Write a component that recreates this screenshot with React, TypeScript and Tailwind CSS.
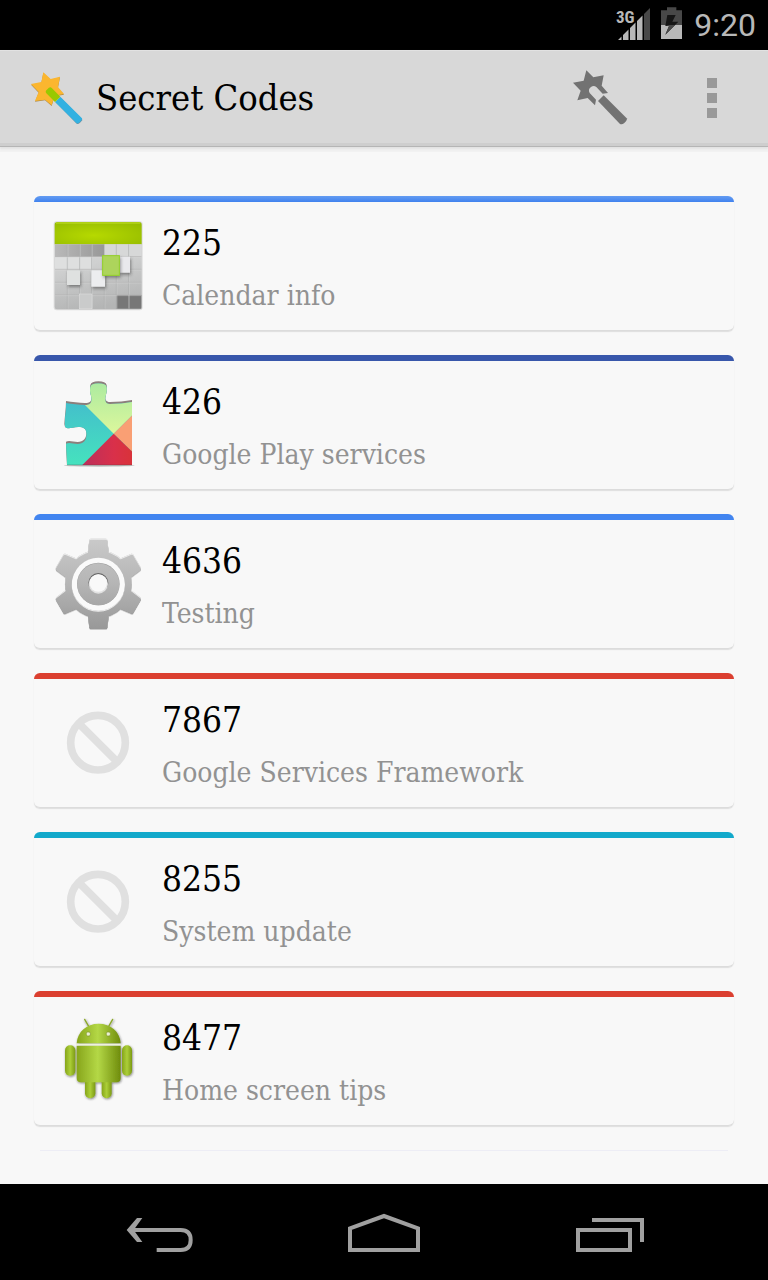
import React from "react";

type Code = { code: string; label: string; bar: string; icon: () => React.ReactElement };

function CalendarIcon() {
  const cols = [124, 161, 197, 235, 271, 308];
  const rows = [212, 250, 289, 327];
  return (
    <svg viewBox="72 96 288 288" className="size-24" aria-hidden="true">
      <defs>
        <radialGradient id="calTop" cx="0.45" cy="0.6" r="0.7">
          <stop offset="0" stopColor="#b6d900" />
          <stop offset="1" stopColor="#97bd00" />
        </radialGradient>
        <linearGradient id="calBody" x1="0.2" y1="0" x2="0.4" y2="1">
          <stop offset="0" stopColor="#dcdddd" />
          <stop offset="0.5" stopColor="#cfd0d0" />
          <stop offset="1" stopColor="#b4b5b5" />
        </linearGradient>
        <linearGradient id="calRow" x1="0" x2="1">
          <stop offset="0" stopColor="#b9b9b9" />
          <stop offset="1" stopColor="#989898" />
        </linearGradient>
        <filter id="calShadow" x="-30%" y="-30%" width="170%" height="170%">
          <feDropShadow dx="3" dy="6" stdDeviation="4" floodColor="#333" floodOpacity="0.5" />
        </filter>
      </defs>
      <rect x="83" y="106" width="267" height="267" rx="9" fill="#dcdcdc" />
      <rect x="86" y="108" width="261" height="262" rx="7" fill="url(#calBody)" />
      <path d="M86 175V116q0-8 8-8h245q8 0 8 8v59z" fill="url(#calTop)" />
      <path d="M90 111h253" stroke="#c2e02a" strokeWidth="3" />
      <rect x="87" y="175" width="148" height="37" fill="url(#calRow)" />
      <rect x="235" y="175" width="111" height="37" fill="#d7d8d8" />
      <rect x="87" y="213" width="110" height="37" fill="#dedfdf" />
      <rect x="271" y="327" width="75" height="41" fill="#777" />
      {cols.map((x) => (
        <g key={x}>
          <path d={`M${x} 175V368`} stroke="#a9aaaa" strokeWidth="2" />
          <path d={`M${x + 2} 175V368`} stroke="#dedede" strokeWidth="1" />
        </g>
      ))}
      {rows.map((y) => (
        <g key={y}>
          <path d={`M87 ${y}H346`} stroke="#b0b1b1" strokeWidth="2" />
          <path d={`M87 ${y + 2}H346`} stroke="#e2e2e2" strokeWidth="1" />
        </g>
      ))}
      <rect x="160" y="324" width="38" height="44" fill="#cacbcb" stroke="#dcdcdc" strokeWidth="2" />
      <g filter="url(#calShadow)">
        <rect x="123" y="253" width="39" height="44" fill="#dfe1e0" />
        <rect x="281" y="212" width="31" height="48" fill="#e9e9ec" />
        <rect x="196" y="253" width="41" height="49" fill="#ecedef" />
      </g>
      <rect x="229" y="208" width="52" height="61" fill="#add45c" filter="url(#calShadow)" />
      <rect x="230" y="209" width="50" height="59" fill="none" stroke="#93cf2b" strokeWidth="3" />
    </svg>
  );
}

function PlayServicesIcon() {
  const shape =
    "M120 153C140 156 165 160 182 159C194 158 199 149 195 137C192 130 191 115 193 105Q196 94 217 94Q239 94 242 105C244 115 242 130 239 138C236 149 240 156 252 156C275 156 298 153 318 150V346H123C122 325 120 298 120 275C130 270 142 276 155 276C172 276 181 265 181 250C181 236 172 231 157 231C140 231 133 237 122 234Q115 231 115 222C116 200 120 178 120 153z";
  return (
    <svg viewBox="72 81 288 288" className="size-24" aria-hidden="true">
      <defs>
        <clipPath id="puzzle">
          <path d={shape} />
        </clipPath>
        <clipPath id="puzzleFace">
          <path d={shape} transform="translate(0 6)" />
        </clipPath>
        <linearGradient id="pTeal" x1="0" y1="0" x2="0" y2="1">
          <stop offset="0.2" stopColor="#43bdcc" />
          <stop offset="1" stopColor="#46e5bd" />
        </linearGradient>
        <linearGradient id="pGreen" x1="0" y1="0" x2="0" y2="1">
          <stop offset="0" stopColor="#a9eaa0" />
          <stop offset="1" stopColor="#dcf79c" />
        </linearGradient>
        <linearGradient id="pRed" x1="0" x2="1">
          <stop offset="0" stopColor="#b92f5c" />
          <stop offset="0.6" stopColor="#d9304a" />
          <stop offset="1" stopColor="#d93336" />
        </linearGradient>
      </defs>
      <ellipse cx="220" cy="347" rx="106" ry="3" fill="#999" opacity="0.6" />
      <path d={shape} fill="#8c7f7c" />
      <g clipPath="url(#puzzle)">
        <g clipPath="url(#puzzleFace)">
          <rect x="100" y="90" width="230" height="270" fill="url(#pTeal)" />
          <path d="M263 251L100 88H330V185z" fill="url(#pGreen)" />
          <path d="M330 185L263 251L330 316z" fill="#f99f74" />
          <path d="M263 251L330 316V350H164z" fill="url(#pRed)" />
        </g>
        <path d="M115 345H320" stroke="#593744" strokeWidth="2" opacity="0.5" />
      </g>
    </svg>
  );
}

function GearIcon() {
  const teeth = [0, 60, 120, 180, 240, 300];
  return (
    <svg viewBox="72 78 288 288" className="size-24" aria-hidden="true">
      <defs>
        <linearGradient id="gear" gradientUnits="userSpaceOnUse" x1="0" y1="86" x2="0" y2="354">
          <stop offset="0" stopColor="#c9c9c9" />
          <stop offset="0.5" stopColor="#b5b5b5" />
          <stop offset="1" stopColor="#989898" />
        </linearGradient>
        <mask id="teeth" maskUnits="userSpaceOnUse" x="72" y="78" width="288" height="288">
          <circle cx="217" cy="220" r="100" fill="#fff" />
          {teeth.map((a) => (
            <path key={a} d="M185 130L190 90Q191 86 195 86H239Q243 86 244 90L249 130z" fill="#fff" transform={`rotate(${a} 217 220)`} />
          ))}
          <circle cx="217" cy="222" r="80" fill="#000" />
        </mask>
        <filter id="gearEdge" x="-10%" y="-10%" width="120%" height="120%">
          <feDropShadow dx="0" dy="1" stdDeviation="2" floodColor="#444" floodOpacity="0.8" />
        </filter>
      </defs>
      <g filter="url(#gearEdge)">
        <rect x="72" y="78" width="288" height="288" fill="#ededed" mask="url(#teeth)" />
        <g transform="translate(0 3)">
          <rect x="72" y="78" width="288" height="285" fill="url(#gear)" mask="url(#teeth)" />
        </g>
      </g>
      <circle cx="217" cy="222" r="79" fill="#fafafa" />
      <circle cx="217" cy="222" r="64" fill="#a3a3a3" />
      <circle cx="217" cy="223" r="63" fill="url(#gear)" />
      <circle cx="217" cy="219" r="30" fill="#666" />
      <circle cx="217" cy="222" r="29" fill="#e2e2e2" />
      <circle cx="217" cy="219" r="26" fill="#f9f9f9" />
    </svg>
  );
}

function NoIcon() {
  return (
    <svg viewBox="72 87 288 288" className="size-24" fill="none" stroke="#e0e0e0" strokeWidth="23" aria-hidden="true">
      <circle cx="216" cy="230" r="82" />
      <path d="M160 174L272 286" />
    </svg>
  );
}

function AndroidIcon() {
  return (
    <svg viewBox="72 87 288 288" className="size-24" aria-hidden="true">
      <defs>
        <linearGradient id="droid" x1="0" x2="1">
          <stop offset="0" stopColor="#87a51b" />
          <stop offset="0.48" stopColor="#b4d846" />
          <stop offset="1" stopColor="#6f8c0c" />
        </linearGradient>
        <linearGradient id="limb" x1="0" x2="1">
          <stop offset="0" stopColor="#86a51b" />
          <stop offset="0.5" stopColor="#accf38" />
          <stop offset="1" stopColor="#7c9a15" />
        </linearGradient>
        <filter id="droidShadow" x="-10%" y="-10%" width="125%" height="125%">
          <feDropShadow dx="2" dy="3" stdDeviation="2.500" floodColor="#222" floodOpacity="0.55" />
        </filter>
      </defs>
      <g filter="url(#droidShadow)">
        <path d="M176 106L188 127M260 106L248 127" stroke="#8ba82b" strokeWidth="4" strokeLinecap="round" />
        <rect x="177" y="280" width="31" height="63" rx="15" fill="url(#limb)" />
        <rect x="227" y="280" width="30" height="63" rx="15" fill="url(#limb)" />
        <rect x="117" y="184" width="31" height="91" rx="15" fill="url(#limb)" />
        <rect x="288" y="184" width="30" height="91" rx="15" fill="url(#limb)" />
        <path d="M152 178C154 143 182 119 218 119S282 143 284 178z" fill="url(#droid)" />
        <path d="M152 185H284V282Q284 295 271 295H165Q152 295 152 282z" fill="url(#droid)" />
      </g>
      <path d="M152 181.500H284" stroke="#edf1dc" strokeWidth="5" />
      <rect x="181" y="144" width="12" height="12" rx="4" fill="#e9efd0" stroke="#7c941f" strokeWidth="2" />
      <rect x="241" y="144" width="12" height="12" rx="4" fill="#e9efd0" stroke="#7c941f" strokeWidth="2" />
    </svg>
  );
}

const codes: Code[] = [
  { code: "225", label: "Calendar info", bar: "bg-linear-to-b from-[#649cf2] to-[#4082ee]", icon: CalendarIcon },
  { code: "426", label: "Google Play services", bar: "bg-[#3857ab]", icon: PlayServicesIcon },
  { code: "4636", label: "Testing", bar: "bg-[#4285f0]", icon: GearIcon },
  { code: "7867", label: "Google Services Framework", bar: "bg-[#db3f30]", icon: NoIcon },
  { code: "8255", label: "System update", bar: "bg-[#12a9cb]", icon: NoIcon },
  { code: "8477", label: "Home screen tips", bar: "bg-[#db3f30]", icon: AndroidIcon },
];

function StatusBar() {
  return (
    <div className="flex h-[50px] items-center justify-end bg-black pr-3 text-[#b8b8b8]">
      <svg viewBox="0 5 40 40" className="mr-2 size-10" role="img" aria-label="3G signal">
        <path d="M38 8V40H32V14z" fill="#484848" />
        <path d="M30.500 15.500V40H25V21zM23.500 22.500V40H18V28zM16.500 29.500V40H11V35zM9.500 36.500V40H6z" fill="#b8b8b8" />
        <text x="4" y="23" fill="#b8b8b8" fontSize="17" fontWeight="700" fontFamily="'Liberation Sans Narrow','Roboto Condensed',Roboto,sans-serif">3G</text>
      </svg>
      <svg viewBox="180 21 72 108" className="mr-[10px] h-9 w-6" role="img" aria-label="Battery charging">
        <path d="M183 31H201V22H229V31H246V75H183z" fill="#484848" />
        <path d="M183 75H246V117H183z" fill="#b8b8b8" />
        <path d="M202 45H227L217 65H235L196 104L207 78H196z" fill="#151515" />
        <path d="M198 75H225L196 104L207 78z" fill="#484848" />
      </svg>
      <time className="font-[Roboto,sans-serif] text-[32px] leading-[50px]">9:20</time>
    </div>
  );
}

function Header() {
  return (
    <header className="z-10 flex h-[97px] items-center border-t border-b border-t-[#e2e2e2] border-b-[#b5b5b5] bg-[#d8d8d8] px-6 pb-px shadow-[inset_0_-3px_0_#cecece,0_2px_2px_#e2e2e2,0_5px_0_#f2f2f2]">
      <svg viewBox="72 66 192 192" className="mr-2 size-16" aria-hidden="true">
        <path d="M130 87L152 107L180 100L174 131L192 152L164 157L155 186L135 169L105 173L116 146L93 122L124 116z" fill="#a98749" />
        <path d="M130 85L152 105L180 98L174 129L192 150L164 155L155 184L135 167L105 171L116 144L93 120L124 114z" fill="#fbb62f" />
        <path d="M167 175L230 239Q236 243 247 229L246 225L182 161z" fill="#6f8f9d" />
        <path d="M165 174L229 237Q234 241 240 234Q248 227 246 223L181 158z" fill="#33b1e1" />
        <path d="M139 148Q134 142 142 136Q150 126 156 133L181 158L165 174z" fill="#98c900" />
      </svg>
      <h1 className="flex-1 text-[36px] leading-[48px] text-black">Secret Codes</h1>
      <button type="button" aria-label="Search for secret codes" className="mr-12">
        <svg viewBox="84 48 192 192" className="size-16" fill="#727272" aria-hidden="true">
          <path d="M139 61L160 82L191 76L185 107L204 129L188 131L169 111Q161 105 153 111Q143 119 149 129L168 149L165 166L143 144L112 151L122 122L99 98L131 92z" />
          <path d="M174 153L191 136L260 205Q263 210 253 219Q246 225 240 222z" />
        </svg>
      </button>
      <button type="button" aria-label="More options" className="flex w-16 flex-col items-center gap-[5px]">
        <span className="size-[10px] bg-[#999]" />
        <span className="size-[10px] bg-[#999]" />
        <span className="size-[10px] bg-[#999]" />
      </button>
    </header>
  );
}

function CodeCard({ code, label, bar, icon: Icon }: Code) {
  return (
    <li className="overflow-hidden rounded-md border-b border-[#dcdcdc] bg-[#f8f8f8] shadow-[0_1px_1px_#dedede]">
      <div className={`h-[6px] ${bar}`} />
      <a href={`#${code}`} className="flex items-center gap-4 px-4 py-[14px]">
        <Icon />
        <div>
          <div className="text-[35px] leading-[54px] text-black">{code}</div>
          <div className="mt-[6px] text-[28px] leading-[40px] text-[#929292]">{label}</div>
        </div>
      </a>
    </li>
  );
}

function NavBar() {
  return (
    <nav className="flex h-24 items-center justify-center gap-36 bg-black">
      <button type="button" aria-label="Back">
        <svg viewBox="60 84 240 144" className="h-12 w-20" fill="none" stroke="#a0a0a0" strokeWidth="12" aria-hidden="true">
          <path d="M94 150H242C263 150 272 162 272 180S263 210 242 210H170" />
          <path d="M111 114H127L101 150L127 186H111L80 150z" fill="#a0a0a0" stroke="none" />
        </svg>
      </button>
      <button type="button" aria-label="Home">
        <svg viewBox="732 84 240 144" className="h-12 w-20" fill="none" stroke="#a0a0a0" strokeWidth="12" aria-hidden="true">
          <path d="M750 210V145L852 108L954 145V210z" />
        </svg>
      </button>
      <button type="button" aria-label="Recent apps">
        <svg viewBox="84 84 240 144" className="h-12 w-20" fill="none" stroke="#a0a0a0" strokeWidth="12" aria-hidden="true">
          <path d="M114 150H270V210H114zM156 120H306V186" />
        </svg>
      </button>
    </nav>
  );
}

export default function App() {
  return (
    <div className="flex min-h-screen flex-col bg-[#f8f8f8] font-['Roboto_Slab','DejaVu_Serif_Condensed','DejaVu_Serif',serif]">
      <StatusBar />
      <Header />
      <main className="flex-1 px-[34px] pt-[49px]">
        <ul className="flex flex-col gap-6">
          {codes.map((c) => (
            <CodeCard key={c.code} {...c} />
          ))}
        </ul>
        <div className="mx-[6px] mt-6 border-t border-[#ededf5]" />
      </main>
      <NavBar />
    </div>
  );
}
